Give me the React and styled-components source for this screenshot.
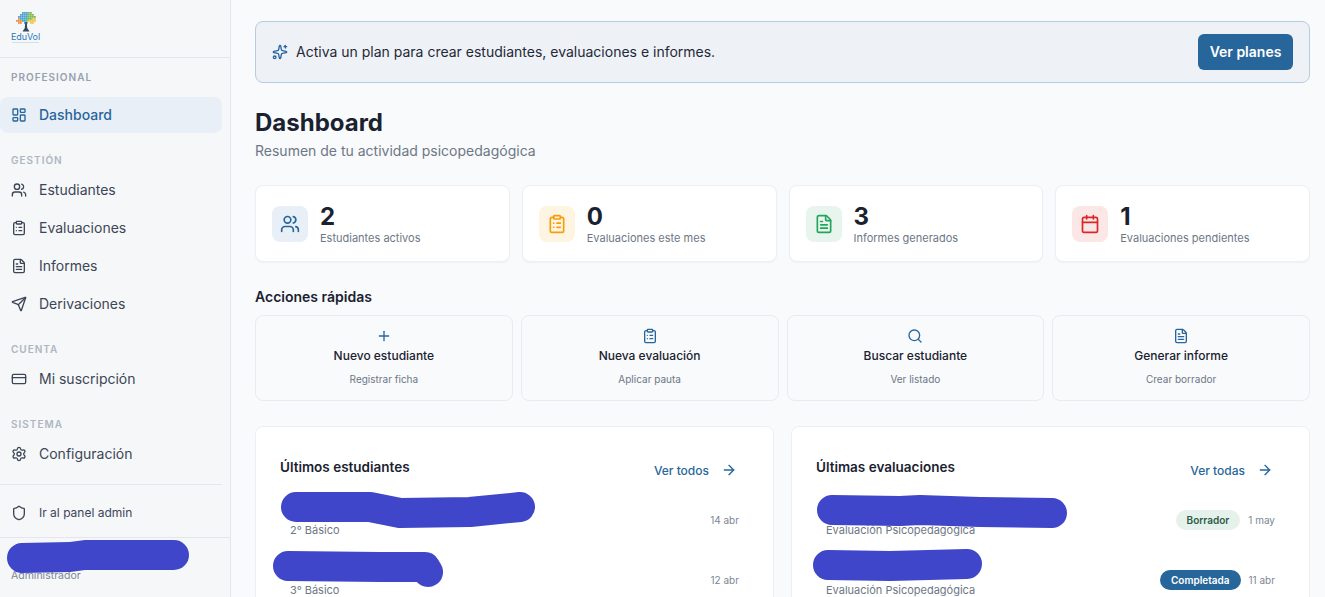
import React from 'react';
import styled, { createGlobalStyle } from 'styled-components';
import {
  LayoutDashboard, Users, ClipboardList, FileText, Send, CreditCard, Settings,
  Shield, Sparkles, Plus, Search, ArrowRight, Calendar,
} from 'lucide-react';

const primary = '#27669b';

const GlobalStyle = createGlobalStyle`
  html, body {
    margin: 0;
    padding: 0;
    height: 100%;
    overflow: hidden;
    background: #f9fafc;
    font-family: Inter, "Noto Sans", sans-serif;
    color: #1a2230;
  }
  * { box-sizing: border-box; }
`;

const Page = styled.div`
  position: relative;
  display: flex;
  width: 1325px;
  height: 597px;
  overflow: hidden;
`;

const Sidebar = styled.aside`
  flex: 0 0 231px;
  display: flex;
  flex-direction: column;
  background: #f6f7f9;
  border-right: 1px solid #e3e6ec;
`;

const LogoBar = styled.div`
  height: 58px;
  flex: none;
  padding: 12px 0 0 11px;
  border-bottom: 1px solid #e3e6ec;
`;

const LogoBox = styled.div`
  width: 29px;
  display: flex;
  flex-direction: column;
  align-items: center;
`;

const LogoWord = styled.span`
  font-size: 9px;
  line-height: 9px;
  letter-spacing: -0.1px;
  color: #2c78b5;
`;

const LogoTagline = styled.span`
  width: 27px;
  height: 1px;
  margin-top: 1px;
  background: #d3e0ea;
`;

const SideNav = styled.nav`
  display: flex;
  flex-direction: column;
  padding-top: 11px;
`;

const SectionLabel = styled.div`
  height: 16px;
  line-height: 16px;
  margin: ${(p) => (p.$first ? '0 0 12px' : '19px 0 4px')};
  padding-left: 11px;
  font-size: 10px;
  font-weight: 600;
  letter-spacing: 1px;
  color: ${(p) => (p.$first ? '#97a1af' : '#aeb6c2')};
`;

const NavList = styled.div`
  display: flex;
  flex-direction: column;
  gap: 2px;
`;

const NavItem = styled.a`
  display: flex;
  align-items: center;
  gap: 12px;
  width: 222px;
  height: 36px;
  padding-left: 11px;
  border-radius: 8px;
  font-size: ${(p) => (p.$small ? '12px' : '14px')};
  font-weight: ${(p) => (p.$active ? 500 : 400)};
  color: ${(p) => (p.$active ? primary : '#3c4656')};
  background: ${(p) => (p.$active ? '#e9eff7' : 'transparent')};
`;

const NavText = styled.span`
  margin-top: -1px;
`;

const SideDivider = styled.div`
  width: 222px;
  height: 1px;
  margin: 12px 0 10px;
  background: #e3e6ec;
`;

const UserBox = styled.div`
  margin-top: 6px;
  padding: 31px 0 0 11px;
  border-top: 1px solid #e3e6ec;
  font-size: 10.5px;
  line-height: 14px;
  color: #7c8695;
`;

const Main = styled.main`
  flex: 1;
  min-width: 0;
  padding: 21px 15px 0 24px;
  background: #f9fafc;
`;

const Banner = styled.div`
  display: flex;
  align-items: center;
  justify-content: space-between;
  height: 62px;
  padding: 0 16px;
  background: #eef1f6;
  border: 1px solid #b5cde0;
  border-radius: 8px;
`;

const BannerText = styled.div`
  display: flex;
  align-items: center;
  gap: 8px;
  font-size: 14px;
  color: #1f2937;
`;

const PlanButton = styled.button`
  width: 95px;
  height: 36px;
  padding-bottom: 2px;
  border: none;
  border-radius: 6px;
  background: ${primary};
  color: #fff;
  font-family: inherit;
  font-size: 14px;
  font-weight: 600;
`;

const Title = styled.h1`
  margin: 24px 0 0;
  font-size: 24px;
  line-height: 32px;
  font-weight: 700;
  color: #1a2230;
`;

const Subtitle = styled.p`
  margin: 2px 0 0;
  font-size: 14px;
  line-height: 20px;
  color: #6d7786;
`;

const StatGrid = styled.div`
  display: grid;
  grid-template-columns: repeat(4, 1fr);
  gap: 12px;
  margin-top: 24px;
`;

const StatCard = styled.div`
  display: flex;
  align-items: center;
  gap: 12px;
  height: 77px;
  padding: 0 16px;
  background: #fff;
  border: 1px solid #eceff3;
  border-radius: 8px;
  box-shadow: 0 1px 2px rgba(20, 30, 50, 0.04);
`;

const StatIcon = styled.div`
  flex: none;
  display: flex;
  align-items: center;
  justify-content: center;
  width: 36px;
  height: 36px;
  border-radius: 8px;
  background: ${(p) => p.$bg};
  color: ${(p) => p.$fg};
`;

const StatValue = styled.div`
  margin-top: 1px;
  font-size: 24px;
  line-height: 28px;
  font-weight: 700;
  color: #1a2230;
`;

const StatLabel = styled.div`
  font-size: 11px;
  line-height: 15px;
  color: #6d7786;
`;

const SectionTitle = styled.h2`
  margin: 25px 0 8px;
  font-size: 14px;
  line-height: 20px;
  font-weight: 600;
  color: #1a2230;
`;

const QuickGrid = styled.div`
  display: grid;
  grid-template-columns: repeat(4, 1fr);
  gap: 8px;
`;

const QuickCard = styled.div`
  display: flex;
  flex-direction: column;
  align-items: center;
  height: 86px;
  padding-top: 12px;
  border: 1px solid #e8ebf0;
  border-radius: 8px;
  color: ${primary};
`;

const QuickName = styled.div`
  margin-top: 4px;
  font-size: 12px;
  line-height: 16px;
  font-weight: 500;
  color: #1a2230;
`;

const QuickHint = styled.div`
  margin-top: 8px;
  font-size: 10px;
  line-height: 14px;
  color: #6d7786;
`;

const PanelGrid = styled.div`
  display: grid;
  grid-template-columns: repeat(2, 1fr);
  gap: 17px;
  margin-top: 25px;
`;

const Panel = styled.section`
  height: 300px;
  padding: 30px 24px 0;
  background: #fff;
  border: 1px solid #eceff3;
  border-radius: 8px;
`;

const PanelHead = styled.div`
  display: flex;
  justify-content: space-between;
  height: 33px;
`;

const PanelTitle = styled.h3`
  margin: 0;
  font-size: 13.5px;
  line-height: 20px;
  font-weight: 600;
  color: #1a2230;
`;

const SeeAll = styled.a`
  display: flex;
  align-items: center;
  gap: 12px;
  height: 20px;
  margin-top: 3px;
  padding-right: 12px;
  font-size: 12px;
  font-weight: 500;
  color: ${primary};
`;

const Row = styled.div`
  display: flex;
  align-items: center;
  justify-content: space-between;
  height: 60px;
  padding: 0 10px;
`;

const RowName = styled.div`
  height: 16px;
  margin-bottom: 4px;
`;

const RowSub = styled.div`
  font-size: 11px;
  line-height: 16px;
  color: #6d7786;
`;

const RowMeta = styled.div`
  display: flex;
  align-items: center;
  gap: 8px;
`;

const RowDate = styled.span`
  font-size: 10px;
  color: #7c8695;
`;

const Badge = styled.span`
  display: flex;
  align-items: center;
  height: 20px;
  padding: 0 11px;
  border-radius: 10px;
  font-size: 10px;
  font-weight: 600;
  background: ${(p) => (p.$done ? primary : '#e5f2ec')};
  color: ${(p) => (p.$done ? '#fff' : '#2f5a48')};
`;

// hand scribbles covering personal names, they sit over everything
const Scribbles = styled.svg`
  position: absolute;
  inset: 0;
  pointer-events: none;
  fill: none;
  stroke: #3f46c9;
  stroke-width: 30;
  stroke-linecap: round;
  stroke-linejoin: round;
`;

const stats = [
  { value: 2, label: 'Estudiantes activos', Icon: Users, bg: '#e9eff6', fg: primary },
  { value: 0, label: 'Evaluaciones este mes', Icon: ClipboardList, bg: '#fef4e2', fg: '#f59e0b' },
  { value: 3, label: 'Informes generados', Icon: FileText, bg: '#e8f4ee', fg: '#22a65a' },
  { value: 1, label: 'Evaluaciones pendientes', Icon: Calendar, bg: '#fce7e7', fg: '#dc2626' },
];

const quick = [
  { name: 'Nuevo estudiante', hint: 'Registrar ficha', Icon: Plus },
  { name: 'Nueva evaluación', hint: 'Aplicar pauta', Icon: ClipboardList },
  { name: 'Buscar estudiante', hint: 'Ver listado', Icon: Search },
  { name: 'Generar informe', hint: 'Crear borrador', Icon: FileText },
];

// tree crown of the logo, one letter per little square
const crown = [
  '...tbbgg..',
  '..bbbtggg.',
  '.bbbbtgggg',
  '.obbttggyy',
  'oootbgyyyy',
  '.oo.bg.yy.',
];

const crownColors = { b: '#4f9fd6', t: '#3fb0a8', g: '#7dbb52', o: '#ee8a45', y: '#eec24e' };

const Logo = () => (
  <LogoBox>
    <svg width="20" height="20" viewBox="0 0 20 20">
      {crown.map((row, y) =>
        row.split('').map((c, x) =>
          c === '.' ? null : (
            <rect key={`${x}-${y}`} x={x * 2} y={y * 2} width="1.8" height="1.8" fill={crownColors[c]} />
          )
        )
      )}
      <path d="M9.2 10h1.6l.4 6 2.3 3.5H6.5L8.8 16z" fill="#34495f" />
    </svg>
    <LogoWord>EduVol</LogoWord>
    <LogoTagline />
  </LogoBox>
);

const SideLink = ({ icon: Icon, children, ...rest }) => (
  <NavItem {...rest}>
    <Icon size={16} />
    <NavText>{children}</NavText>
  </NavItem>
);

export default function App() {
  return (
    <Page>
      <GlobalStyle />
      <Sidebar>
        <LogoBar><Logo /></LogoBar>
        <SideNav>
          <SectionLabel $first>PROFESIONAL</SectionLabel>
          <NavList>
            <SideLink $active icon={LayoutDashboard}>Dashboard</SideLink>
          </NavList>
          <SectionLabel>GESTIÓN</SectionLabel>
          <NavList>
            <SideLink icon={Users}>Estudiantes</SideLink>
            <SideLink icon={ClipboardList}>Evaluaciones</SideLink>
            <SideLink icon={FileText}>Informes</SideLink>
            <SideLink icon={Send}>Derivaciones</SideLink>
          </NavList>
          <SectionLabel>CUENTA</SectionLabel>
          <NavList>
            <SideLink icon={CreditCard}>Mi suscripción</SideLink>
          </NavList>
          <SectionLabel>SISTEMA</SectionLabel>
          <NavList>
            <SideLink icon={Settings}>Configuración</SideLink>
          </NavList>
          <SideDivider />
          <SideLink $small icon={Shield}>Ir al panel admin</SideLink>
        </SideNav>
        <UserBox>Administrador</UserBox>
      </Sidebar>

      <Main>
        <Banner>
          <BannerText>
            <Sparkles size={16} color={primary} />
            <NavText>Activa un plan para crear estudiantes, evaluaciones e informes.</NavText>
          </BannerText>
          <PlanButton>Ver planes</PlanButton>
        </Banner>

        <Title>Dashboard</Title>
        <Subtitle>Resumen de tu actividad psicopedagógica</Subtitle>

        <StatGrid>
          {stats.map(({ value, label, Icon, bg, fg }) => (
            <StatCard key={label}>
              <StatIcon $bg={bg} $fg={fg}><Icon size={20} /></StatIcon>
              <div>
                <StatValue>{value}</StatValue>
                <StatLabel>{label}</StatLabel>
              </div>
            </StatCard>
          ))}
        </StatGrid>

        <SectionTitle>Acciones rápidas</SectionTitle>
        <QuickGrid>
          {quick.map(({ name, hint, Icon }) => (
            <QuickCard key={name}>
              <Icon size={16} />
              <QuickName>{name}</QuickName>
              <QuickHint>{hint}</QuickHint>
            </QuickCard>
          ))}
        </QuickGrid>

        <PanelGrid>
          <Panel>
            <PanelHead>
              <PanelTitle>Últimos estudiantes</PanelTitle>
              <SeeAll>Ver todos <ArrowRight size={16} /></SeeAll>
            </PanelHead>
            <Row>
              <div><RowName /><RowSub>2° Básico</RowSub></div>
              <RowDate>14 abr</RowDate>
            </Row>
            <Row>
              <div><RowName /><RowSub>3° Básico</RowSub></div>
              <RowDate>12 abr</RowDate>
            </Row>
          </Panel>
          <Panel>
            <PanelHead>
              <PanelTitle>Últimas evaluaciones</PanelTitle>
              <SeeAll>Ver todas <ArrowRight size={16} /></SeeAll>
            </PanelHead>
            <Row>
              <div><RowName /><RowSub>Evaluación Psicopedagógica</RowSub></div>
              <RowMeta><Badge>Borrador</Badge><RowDate>1 may</RowDate></RowMeta>
            </Row>
            <Row>
              <div><RowName /><RowSub>Evaluación Psicopedagógica</RowSub></div>
              <RowMeta><Badge $done>Completada</Badge><RowDate>11 abr</RowDate></RowMeta>
            </Row>
          </Panel>
        </PanelGrid>
      </Main>

      <Scribbles width="1325" height="597" viewBox="0 0 1325 597">
        <path d="M22 558 L70 557 L85 555 L174 555" />
        <path d="M296 507 L370 507 L400 513 L470 512 L520 507" />
        <path d="M288 566 L380 567 L425 567 L428 572" />
        <path d="M832 510 L900 511 L920 510 L980 512 L1052 513" />
        <path d="M828 565 L890 566 L967 564" />
      </Scribbles>
    </Page>
  );
}
